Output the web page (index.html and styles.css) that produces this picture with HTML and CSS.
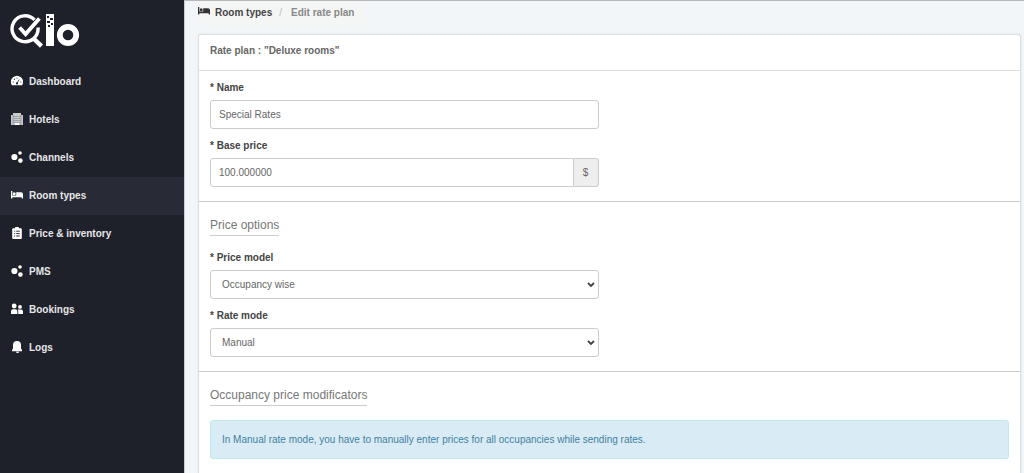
FILE: index.html
```html
<!DOCTYPE html>
<html lang="en">
<head>
  <meta charset="UTF-8" />
  <meta name="viewport" content="width=device-width, initial-scale=1" />
  <title>Edit rate plan - Qlo</title>
  <link rel="stylesheet" href="styles.css">
</head>
<body>
  <svg class="sprite" aria-hidden="true">
    <symbol id="dots" viewBox="0 0 12 12">
      <circle cx="3.4" cy="6" r="3.1" />
      <circle cx="9" cy="2" r="1.8" />
      <circle cx="9.4" cy="9.6" r="2.3" />
    </symbol>
    <symbol id="bed" viewBox="0 0 12 12">
      <path d="M0 2h1.3v4.6h3.9V3.2H10a2 2 0 0 1 2 2V9.5h-1.3V8.2H1.3v1.3H0z" />
      <circle cx="3.2" cy="4.8" r="1.5" />
    </symbol>
  </svg>

  <aside class="sidebar">
    <a class="logo" href="#" aria-label="Qlo">
      <svg width="70" height="36" viewBox="0 0 70 36" fill="none" stroke="#fff">
        <path d="M24.6 6.9A13 13 0 1 0 28 14.5" stroke-width="3.4" />
        <path d="M23.5 25.5l8 7.7" stroke-width="4.4" />
        <path d="M9.6 14.5l6 6.6L29.4 5.4" stroke-width="3.8" />
        <path d="M36 1h8v32h-8z" fill="#fff" stroke="none" />
        <path d="M37 3h2v2h-2zM40 5h3v2h-3zM37 8h3v2h-3zM41 10h2v2h-2zM38 12h2v2h-2z" fill="#1e202a" stroke="none" />
        <circle cx="58" cy="22" r="8.2" stroke-width="5.8" />
      </svg>
    </a>
    <nav class="menu">
      <a href="#">
        <svg class="icon" viewBox="0 0 12 12"><path d="M1 10.2A6 6 0 1 1 11 10.2z" /><path d="M5.8 8.5l2.4-4" stroke="#1e202a" stroke-width=".8" /><g fill="#1e202a"><circle cx="6" cy="8.4" r="1.1" /><circle cx="2.3" cy="7" r=".6" /><circle cx="3.4" cy="4.2" r=".6" /><circle cx="6" cy="3" r=".6" /><circle cx="9.8" cy="7" r=".6" /></g></svg>
        Dashboard
      </a>
      <a href="#">
        <svg class="icon" viewBox="0 0 12 12"><path d="M2 0h8v2h2v10H0V2h2z" fill="#c9cacd" /><path d="M2 3.5h8M2 5.5h8M2 7.5h8M2 9.5h8M2 2v10M10 2v10" stroke="#858790" stroke-width=".6" /><path d="M4 10h4v2H4z" /></svg>
        Hotels
      </a>
      <a href="#">
        <svg class="icon"><use href="#dots" /></svg>
        Channels
      </a>
      <a class="active" href="#">
        <svg class="icon"><use href="#bed" /></svg>
        Room types
      </a>
      <a href="#">
        <svg class="icon" viewBox="0 0 12 12"><path d="M2.2 1.2H4a2 1.6 0 0 1 4 0h1.8a1 1 0 0 1 1 1V11a1 1 0 0 1-1 1H2.2a1 1 0 0 1-1-1V2.2a1 1 0 0 1 1-1z" /><path d="M3.2 4.2h1M5.2 4.2h3.6M3.2 6.6h1M5.2 6.6h3.6M3.2 9h1M5.2 9h3.6" stroke="#1e202a" stroke-width=".9" /></svg>
        Price &amp; inventory
      </a>
      <a href="#">
        <svg class="icon"><use href="#dots" /></svg>
        PMS
      </a>
      <a href="#">
        <svg class="icon" viewBox="0 0 12 12"><circle cx="3.2" cy="3" r="2.4" /><circle cx="9" cy="3.9" r="1.9" /><path d="M0 11V8.200a2 2 0 0 1 2-2h2.400a2 2 0 0 1 2 2V11zM7.200 11V8.200q0-1-.5-1.600.5-.2 1.200-.2H10a2 2 0 0 1 2 2V11z" /></svg>
        Bookings
      </a>
      <a href="#">
        <svg class="icon" viewBox="0 0 12 12"><path d="M6 0a4 4 0 0 1 4 4v3.4L11 9v1.200H1V9l1-1.600V4a4 4 0 0 1 4-4zM5 10.800h3.200a1.600 1.200 0 0 1-3.200 0z" /></svg>
        Logs
      </a>
    </nav>
  </aside>

  <main class="content">
    <div class="breadcrumb">
      <svg class="icon"><use href="#bed" /></svg>
      <a href="#">Room types</a>
      <span class="slash">/</span>
      <span>Edit rate plan</span>
    </div>

    <form class="panel">
      <h1>Rate plan : "Deluxe rooms"</h1>

      <section>
        <div class="field">
          <label for="name">* Name</label>
          <input id="name" type="text" value="Special Rates" />
        </div>
        <div class="field">
          <label for="price">* Base price</label>
          <div class="input-group">
            <input id="price" type="text" value="100.000000" />
            <span class="addon">$</span>
          </div>
        </div>
      </section>

      <section>
        <h2>Price options</h2>
        <div class="field">
          <label for="model">* Price model</label>
          <select id="model">
            <option>Occupancy wise</option>
          </select>
        </div>
        <div class="field">
          <label for="mode">* Rate mode</label>
          <select id="mode">
            <option>Manual</option>
          </select>
        </div>
      </section>

      <section>
        <h2>Occupancy price modificators</h2>
        <div class="alert">In Manual rate mode, you have to manually enter prices for all occupancies while sending rates.</div>
      </section>
    </form>
  </main>
</body>
</html>
```

FILE: styles.css
```css
* {
  box-sizing: border-box;
}

body {
  margin: 0;
  display: flex;
  min-height: 100vh;
  font-family: "Liberation Sans", Arial, sans-serif;
  font-size: 10px;
  line-height: 15px;
  color: #666;
  background: #f2f6f9;
}

a {
  color: inherit;
  text-decoration: none;
}

.sprite {
  position: absolute;
  width: 0;
  height: 0;
}

.icon {
  width: 12px;
  height: 12px;
  fill: currentColor;
}

/* sidebar */
.sidebar {
  flex: 0 0 184px;
  background: #1e202a;
  color: #fff;
}

.logo {
  display: block;
  height: 63px;
  padding: 13px 10px 0;
}

.menu a {
  display: flex;
  align-items: center;
  gap: 6px;
  height: 38px;
  padding: 0 11px 1px;
  font-weight: bold;
  color: #e6e6e8;
}

.menu .icon {
  color: #fff;
  margin-bottom: 2px;
}

.menu .active {
  background: #282b36;
}

/* content */
.content {
  flex: 1;
  display: flex;
  flex-direction: column;
  padding: 0 3px 0 13px;
  border-top: 1px solid #b4b8bb;
  border-left: 1px solid #c9ccd0;
}

.breadcrumb {
  display: flex;
  align-items: center;
  width: fit-content;
  height: 25px;
  margin-bottom: 8px;
  padding: 0 11px 3px 0;
  background: #f4f5f5;
  font-weight: bold;
  color: #888;
}

.breadcrumb .icon {
  color: #333;
  margin-bottom: 2px;
}

.breadcrumb a {
  margin-left: 5px;
  color: #444;
}

.slash {
  margin: 0 9px 0 7px;
  font-weight: normal;
  color: #bbb;
}

.panel {
  flex: 1;
  background: #fff;
  border: 1px solid #d9dfe3;
  border-bottom: 0;
  border-radius: 3px 3px 0 0;
  box-shadow: 0 0 2px #d9dfe3;
}

h1 {
  margin: 0;
  padding: 8px 11px 11px;
  font-size: 10px;
  line-height: 16px;
  border-bottom: 1px solid #ddd;
}

section {
  padding: 9px 11px 5px;
}

section + section {
  border-top: 1px solid #ccc;
}

h2 {
  width: fit-content;
  margin: 6px 0 14px;
  padding-bottom: 2px;
  font-size: 12px;
  font-weight: normal;
  line-height: 16px;
  color: #777;
  border-bottom: 1px solid #ccc;
}

.field {
  width: calc(50% - 11px);
  margin-bottom: 9px;
}

label {
  display: block;
  margin-bottom: 5px;
  font-weight: bold;
  color: #444;
}

input,
select {
  display: block;
  width: 100%;
  height: 29px;
  padding: 0 8px;
  font: inherit;
  color: #666;
  background: #fff;
  border: 1px solid #ccc;
  border-radius: 3px;
}

select {
  appearance: none;
  padding: 0 11px;
  background: #fff url("data:image/svg+xml,%3Csvg xmlns='http://www.w3.org/2000/svg' width='8' height='6' fill='none' stroke='%23444' stroke-width='1.8'%3E%3Cpath d='M1 1l3 3 3-3'/%3E%3C/svg%3E") no-repeat right 3px center;
}

.input-group {
  display: flex;
}

.input-group input {
  flex: 1;
  border-radius: 3px 0 0 3px;
}

.addon {
  width: 25px;
  line-height: 27px;
  text-align: center;
  background: #eee;
  border: 1px solid #ccc;
  border-left: 0;
  border-radius: 0 3px 3px 0;
}

.alert {
  padding: 11px;
  line-height: 15px;
  color: #3f819e;
  background: #d9ecf6;
  border: 1px solid #c2e8f0;
  border-radius: 3px;
}
```
